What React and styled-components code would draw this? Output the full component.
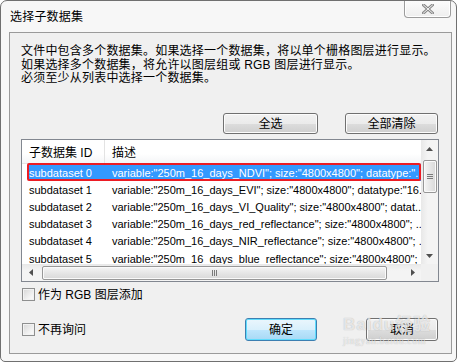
import React from "react";
import styled, { createGlobalStyle } from "styled-components";

const GlobalStyle = createGlobalStyle`
  html, body {
    margin: 0;
    padding: 0;
    background: #ffffff;
  }
  body {
    width: 460px;
    height: 364px;
    overflow: hidden;
  }
`;

const uiFont = `"Liberation Sans", "Noto Sans CJK SC", sans-serif`;

const Window = styled.div`
  position: relative;
  box-sizing: border-box;
  width: 457px;
  height: 362px;
  border: 1px solid #707070;
  border-radius: 7px 7px 5px 5px;
  background: #f7f7f7;
  display: flex;
  flex-direction: column;
  font-family: ${uiFont};
  font-size: 12px;
  color: #000;
  overflow: hidden;
`;

const TitleBar = styled.div`
  height: 31px;
  display: flex;
  justify-content: space-between;
  align-items: flex-start;
  padding-left: 9px;
`;

const Title = styled.div`
  padding-top: 9px;
  line-height: 14px;
  letter-spacing: 0.2px;
`;

const CloseButton = styled.div`
  box-sizing: border-box;
  width: 47px;
  height: 18px;
  margin-right: 5px;
  margin-top: -1px;
  border: 1px solid #9c9c9c;
  border-top: none;
  border-radius: 0 0 4px 4px;
  background: linear-gradient(#fdfdfd, #eeeeee);
  box-shadow: inset 0 0 0 1px #ffffff;
  display: flex;
  align-items: center;
  justify-content: center;
`;

const Panel = styled.div`
  box-sizing: border-box;
  height: 322px;
  margin: 0 4px 0 8px;
  border: 1px solid #9a9a9a;
  background: #f0f0f0;
  padding: 12px 13px 12px 11px;
  display: flex;
  flex-direction: column;
`;

const Intro = styled.p`
  margin: 0;
  line-height: 13.5px;
  letter-spacing: 0.2px;
  white-space: nowrap;
`;

const ButtonRow = styled.div`
  display: flex;
  justify-content: flex-end;
  gap: 27px;
  margin-top: 27.5px;
`;

const Button = styled.button`
  box-sizing: border-box;
  width: ${(p) => p.$w || 72}px;
  height: ${(p) => p.$h || 21}px;
  padding: 0;
  border: 1px solid ${(p) => (p.$primary ? "#3c7fb1" : "#707070")};
  border-radius: 3px;
  font-family: ${uiFont};
  font-size: 12px;
  line-height: 14px;
  color: #000;
  background: ${(p) =>
    p.$primary
      ? "linear-gradient(#eaf6fd 0%, #d9f0fc 50%, #bee6fd 51%, #a7d9f5 100%)"
      : "linear-gradient(#f2f2f2 0%, #ebebeb 50%, #dddddd 51%, #cfcfcf 100%)"};
  box-shadow: ${(p) =>
    p.$primary ? "inset 0 0 0 1px #5fdcfd" : "inset 0 0 0 1px #fcfcfc"};
`;

const ListBox = styled.div`
  box-sizing: border-box;
  width: 418px;
  height: 143px;
  margin-top: 5px;
  border: 1px solid #828790;
  background: #ffffff;
  display: grid;
  grid-template-columns: 1fr 17px;
  grid-template-rows: 1fr 17px;
`;

const ListContent = styled.div`
  overflow: hidden;
`;

const Header = styled.div`
  height: 24px;
  display: flex;
  align-items: center;
  background: linear-gradient(#ffffff 60%, #f4f5f7);
  border-bottom: 1px solid #e5e5e5;
  box-sizing: border-box;
`;

const HeaderCell = styled.div`
  box-sizing: border-box;
  width: ${(p) => (p.$w ? `${p.$w}px` : "auto")};
  flex: ${(p) => (p.$w ? "none" : 1)};
  height: 100%;
  padding-left: 7px;
  padding-top: 6px;
  line-height: 14px;
  border-right: ${(p) => (p.$w ? "1px solid #e3e3e3" : "none")};
`;

const Row = styled.div`
  position: relative;
  height: 17.2px;
  display: flex;
  align-items: center;
  white-space: nowrap;
  font-size: 11px;
  color: ${(p) => (p.$selected ? "#ffffff" : "#000000")};
  background: ${(p) =>
    p.$selected
      ? "linear-gradient(to right, transparent 7px, #3399ff 7px)"
      : "transparent"};
  &::before {
    content: "";
    display: ${(p) => (p.$selected ? "block" : "none")};
    position: absolute;
    left: 5px;
    right: 0;
    top: -1px;
    bottom: 0;
    border: 2px solid #ec1c24;
    border-radius: 2px;
  }
`;

const Cell = styled.div`
  box-sizing: border-box;
  width: ${(p) => (p.$w ? `${p.$w}px` : "auto")};
  flex: ${(p) => (p.$w ? "none" : 1)};
  padding-left: 7px;
  overflow: hidden;
  line-height: 14px;
`;

const VScroll = styled.div`
  background: linear-gradient(to right, #e8e8e8, #f4f4f4 40%, #f4f4f4);
  display: flex;
  flex-direction: column;
`;

const HScroll = styled.div`
  background: linear-gradient(#e8e8e8, #f4f4f4 40%, #f4f4f4);
  display: flex;
  align-items: center;
`;

const ArrowBox = styled.div`
  width: 17px;
  height: 17px;
  flex: none;
  display: flex;
  align-items: center;
  justify-content: center;
`;

const Track = styled.div`
  flex: 1;
  display: flex;
  flex-direction: ${(p) => (p.$vertical ? "column" : "row")};
  align-items: center;
`;

const Thumb = styled.div`
  box-sizing: border-box;
  width: ${(p) => (p.$vertical ? "14px" : "345px")};
  height: ${(p) => (p.$vertical ? "33px" : "14px")};
  margin: ${(p) => (p.$vertical ? "3px 0 0 0" : "0 0 0 3px")};
  border: 1px solid #979797;
  border-radius: 2px;
  background: ${(p) =>
    p.$vertical
      ? "linear-gradient(to right, #f5f5f5, #e6e6e6 50%, #d9d9d9)"
      : "linear-gradient(#f5f5f5, #e6e6e6 50%, #d9d9d9)"};
  box-shadow: inset 0 0 0 1px #fafafa;
  display: flex;
  align-items: center;
  justify-content: center;
`;

const Corner = styled.div`
  background: #f0f0f0;
`;

const CheckRow = styled.label`
  display: flex;
  align-items: center;
  gap: 3px;
  height: 13px;
  line-height: 14px;
  margin-top: ${(p) => p.$top || 0}px;
  margin-left: 1px;
`;

const Box = styled.span`
  box-sizing: border-box;
  width: 13px;
  height: 13px;
  flex: none;
  border: 1px solid #8e8f8f;
  background: linear-gradient(135deg, #d6d6d6, #f4f4f4 70%, #fbfbfb);
  box-shadow: inset 0 0 0 1px #f2f2f2;
`;

const BottomRow = styled.div`
  display: flex;
  align-items: center;
  margin-top: 17px;
  height: 23px;
`;

const Actions = styled.div`
  margin-left: auto;
  display: flex;
  gap: 49px;
`;

const Watermark = styled.div`
  position: absolute;
  left: 342px;
  top: 314px;
  pointer-events: none;
  color: rgba(255, 255, 255, 0.7);
  text-shadow: 0 0 1px rgba(0, 0, 0, 0.3);
  font-family: "Liberation Sans", "Noto Sans CJK SC", sans-serif;
`;

const WatermarkMain = styled.div`
  font-size: 17px;
  font-weight: bold;
  line-height: 20px;
  letter-spacing: 1px;
`;

const WatermarkSub = styled.div`
  font-family: "Liberation Serif", serif;
  font-size: 10px;
  line-height: 12px;
  letter-spacing: 0.5px;
`;

const Tri = ({ dir }) => {
  const pts = {
    up: "0,4 3.5,0 7,4",
    down: "0,0 3.5,4 7,0",
    left: "4,0 0,3.5 4,7",
    right: "0,0 4,3.5 0,7",
  }[dir];
  const vertical = dir === "up" || dir === "down";
  return (
    <svg width={vertical ? 7 : 4} height={vertical ? 4 : 7}>
      <polygon points={pts} fill="#505050" />
    </svg>
  );
};

const rows = [
  ["subdataset 0", 'variable:"250m_16_days_NDVI"; size:"4800x4800"; datatype:".'],
  ["subdataset 1", 'variable:"250m_16_days_EVI"; size:"4800x4800"; datatype:"16.'],
  ["subdataset 2", 'variable:"250m_16_days_VI_Quality"; size:"4800x4800"; datat..'],
  ["subdataset 3", 'variable:"250m_16_days_red_reflectance"; size:"4800x4800"; ..'],
  ["subdataset 4", 'variable:"250m_16_days_NIR_reflectance"; size:"4800x4800"; .'],
  ["subdataset 5", 'variable:"250m_16_days_blue_reflectance"; size:"4800x4800"; .'],
];

export default function App() {
  return (
    <>
      <GlobalStyle />
      <Window>
        <TitleBar>
          <Title>选择子数据集</Title>
          <CloseButton>
            <svg width="12" height="10" viewBox="0 0 12 10">
              <path
                d="M1.5 1 L10.5 9 M10.5 1 L1.5 9"
                stroke="#8a8a8a"
                strokeWidth="3"
                strokeLinecap="square"
              />
              <path
                d="M1.5 1 L10.5 9 M10.5 1 L1.5 9"
                stroke="#f4f4f4"
                strokeWidth="1"
                strokeLinecap="square"
              />
            </svg>
          </CloseButton>
        </TitleBar>

        <Panel>
          <Intro>
            文件中包含多个数据集。如果选择一个数据集，将以单个栅格图层进行显示。
            <br />
            如果选择多个数据集，将允许以图层组或 RGB 图层进行显示。
            <br />
            必须至少从列表中选择一个数据集。
          </Intro>

          <ButtonRow>
            <Button $w={95}>全选</Button>
            <Button $w={93}>全部清除</Button>
          </ButtonRow>

          <ListBox>
            <ListContent>
              <Header>
                <HeaderCell $w={83}>子数据集 ID</HeaderCell>
                <HeaderCell>描述</HeaderCell>
              </Header>
              {rows.map(([id, desc], i) => (
                <Row key={id} $selected={i === 0}>
                  <Cell $w={83}>{id}</Cell>
                  <Cell>{desc}</Cell>
                </Row>
              ))}
            </ListContent>
            <VScroll>
              <ArrowBox>
                <Tri dir="up" />
              </ArrowBox>
              <Track $vertical>
                <Thumb $vertical>
                  <svg width="6" height="7">
                    <path d="M0 1.5 H6 M0 3.5 H6 M0 5.5 H6" stroke="#7a7a7a" strokeWidth="1" />
                  </svg>
                </Thumb>
              </Track>
              <ArrowBox>
                <Tri dir="down" />
              </ArrowBox>
            </VScroll>
            <HScroll>
              <ArrowBox>
                <Tri dir="left" />
              </ArrowBox>
              <Track>
                <Thumb>
                  <svg width="7" height="6">
                    <path d="M1.5 0 V6 M3.5 0 V6 M5.5 0 V6" stroke="#7a7a7a" strokeWidth="1" />
                  </svg>
                </Thumb>
              </Track>
              <ArrowBox>
                <Tri dir="right" />
              </ArrowBox>
            </HScroll>
            <Corner />
          </ListBox>

          <CheckRow $top={6}>
            <Box />
            <span>作为 RGB 图层添加</span>
          </CheckRow>

          <BottomRow>
            <CheckRow>
              <Box />
              <span>不再询问</span>
            </CheckRow>
            <Actions>
              <Button $primary $h={23}>确定</Button>
              <Button $h={23}>取消</Button>
            </Actions>
          </BottomRow>
        </Panel>

        <Watermark>
          <WatermarkMain>Baidu经验</WatermarkMain>
          <WatermarkSub>jingyan.baidu.com</WatermarkSub>
        </Watermark>
      </Window>
    </>
  );
}
